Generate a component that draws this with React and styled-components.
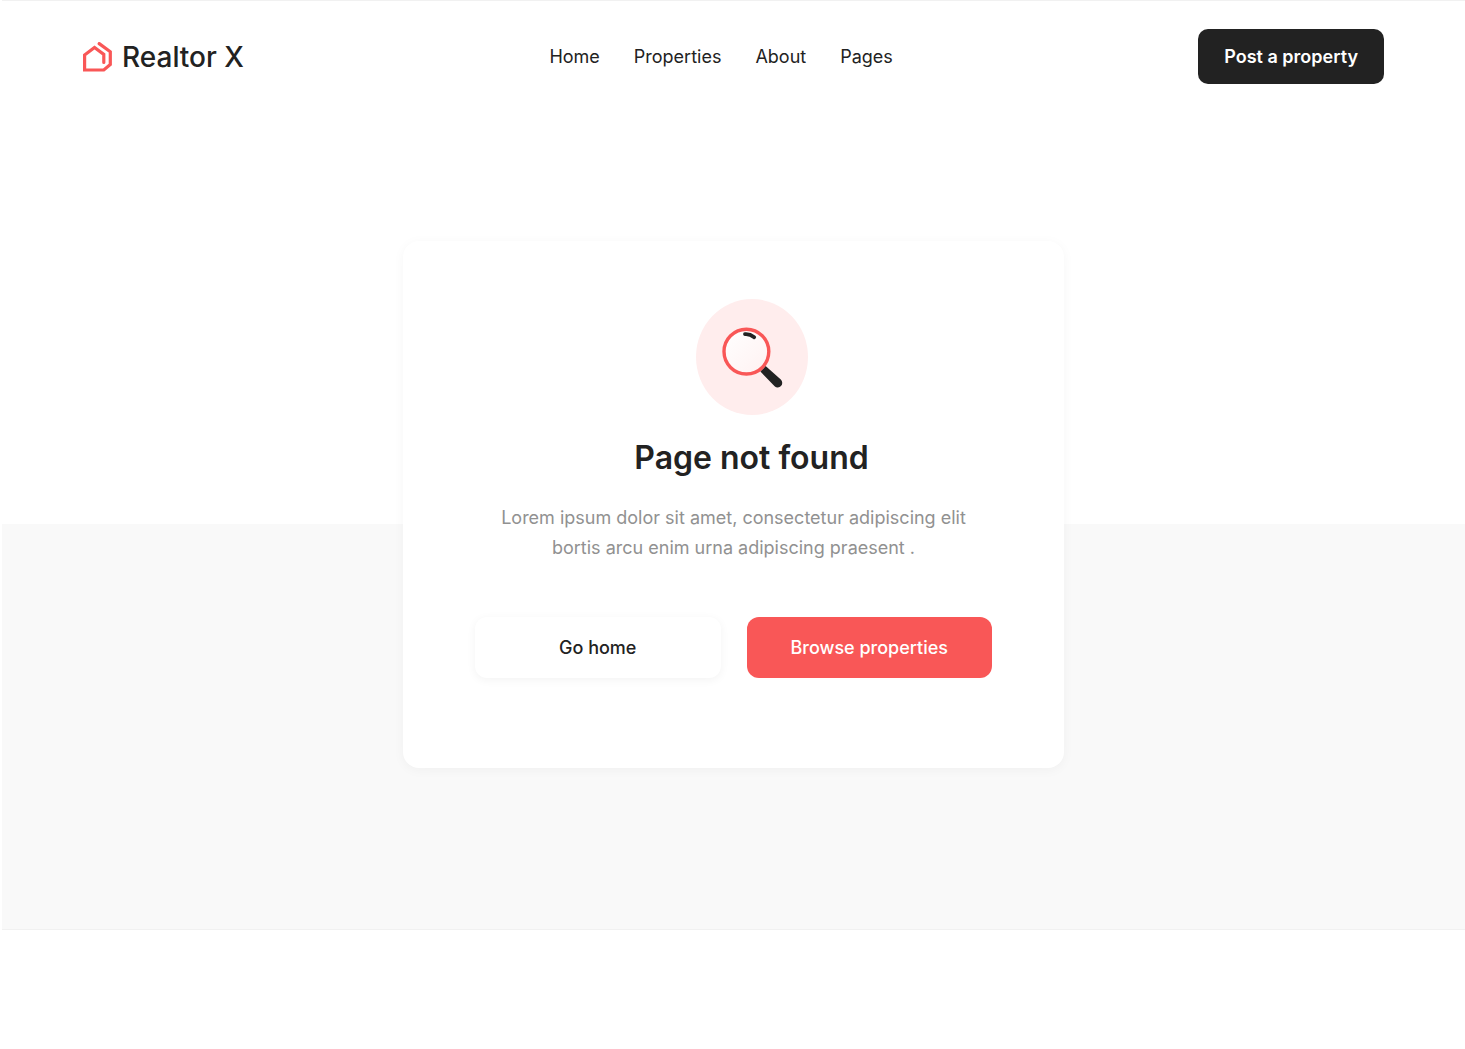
import React from 'react'
import styled, { createGlobalStyle } from 'styled-components'

const links = ['Home', 'Properties', 'About', 'Pages']

const Logo = () => (
  <svg width='29' height='30' viewBox='0 0 29 30' fill='none' aria-hidden='true'>
    <path
      d='M16.2 1.6L27.3 9.8V22.4L20.8 28H1.6V13L11.5 5.4L20.8 12.4V20.4'
      stroke='#f95757'
      strokeWidth='3.2'
      strokeLinecap='round'
    />
  </svg>
)

const SearchArt = () => (
  <svg width='112' height='116' viewBox='0 0 112 116' fill='none' aria-hidden='true'>
    <defs>
      <linearGradient id='lens' x1='0' y1='0' x2='1' y2='1'>
        <stop offset='0' stopColor='#ffffff' />
        <stop offset='1' stopColor='#fff1f1' />
      </linearGradient>
    </defs>
    <ellipse cx='56' cy='58' rx='56' ry='58' fill='#ffeded' />
    <path
      d='M64.4 72.6L69.6 67L84.8 80.6A4.5 4.5 0 0 1 78.6 87.2Z'
      fill='#222222'
    />
    <circle cx='50.4' cy='52.6' r='22.4' fill='url(#lens)' stroke='#f95757' strokeWidth='3.4' />
    <path
      d='M49 35.2C52.6 34.9 55.4 36 58.2 38.2'
      stroke='#222222'
      strokeWidth='3.8'
      strokeLinecap='round'
    />
  </svg>
)

const App = () => {
  return (
    <Page>
      <GlobalStyle />
      <Header>
        <Brand href='#'>
          <Logo />
          Realtor X
        </Brand>
        <Nav>
          {links.map((link) => (
            <NavLink key={link} href='#'>
              {link}
            </NavLink>
          ))}
        </Nav>
        <PostButton type='button'>Post a property</PostButton>
      </Header>
      <Main>
        <Card>
          <Intro>
            <SearchArt />
            <Title>Page not found</Title>
          </Intro>
          <Text>
            Lorem ipsum dolor sit amet, consectetur adipiscing elit
            <br />
            bortis arcu enim urna adipiscing praesent .
          </Text>
          <Actions>
            <ActionButton type='button'>Go home</ActionButton>
            <ActionButton type='button' $primary>
              Browse properties
            </ActionButton>
          </Actions>
        </Card>
      </Main>
    </Page>
  )
}

const GlobalStyle = createGlobalStyle`
  * {
    box-sizing: border-box;
  }
  body {
    margin: 0;
    background: #ffffff;
    color: #222222;
    font-family: Inter, 'Liberation Sans', sans-serif;
  }
  button {
    font-family: inherit;
    cursor: pointer;
  }
`

const Page = styled.div`
  margin-left: 2px;
  border-top: 1px solid #f1f1f1;
`

const Header = styled.header`
  display: flex;
  align-items: center;
  justify-content: space-between;
  padding: 28px 81px 27px;
`

const Brand = styled.a`
  display: flex;
  align-items: center;
  gap: 10px;
  color: #222222;
  font-size: 28px;
  font-weight: 500;
  line-height: 32px;
  text-decoration: none;
`

const Nav = styled.nav`
  display: flex;
  gap: 34px;
`

const NavLink = styled.a`
  color: #222222;
  font-size: 18px;
  line-height: 24px;
  text-decoration: none;
`

const PostButton = styled.button`
  height: 55px;
  padding: 0 26px;
  border: 0;
  border-radius: 10px;
  background: #222222;
  color: #ffffff;
  font-size: 18px;
  font-weight: 600;
`

const Main = styled.main`
  display: flex;
  justify-content: center;
  padding: 130px 24px 161px;
  border-bottom: 1px solid #f1f1f1;
  background: linear-gradient(#ffffff 413px, #f9f9f9 413px);
`

const Card = styled.section`
  width: 100%;
  max-width: 661px;
  padding: 58px 72px 90px;
  border-radius: 16px;
  background: #ffffff;
  box-shadow: 0 2px 12px rgba(0, 0, 0, 0.04);
`

const Intro = styled.div`
  display: flex;
  flex-direction: column;
  align-items: center;
  padding-left: 36px;
`

const Title = styled.h1`
  margin: 23px 0 0;
  font-size: 32px;
  font-weight: 600;
  line-height: 40px;
`

const Text = styled.p`
  margin: 25px 0 0;
  color: #919191;
  font-size: 18px;
  line-height: 30px;
  text-align: center;
`

const Actions = styled.div`
  display: grid;
  grid-template-columns: 1fr 1fr;
  gap: 26px;
  margin-top: 54px;
`

const ActionButton = styled.button`
  height: 61px;
  border: 0;
  border-radius: 12px;
  background: ${(props) => (props.$primary ? '#f95757' : '#ffffff')};
  color: ${(props) => (props.$primary ? '#ffffff' : '#222222')};
  box-shadow: ${(props) =>
    props.$primary ? 'none' : '0 2px 10px rgba(0, 0, 0, 0.05)'};
  font-size: 18px;
  font-weight: 500;
`

export default App
